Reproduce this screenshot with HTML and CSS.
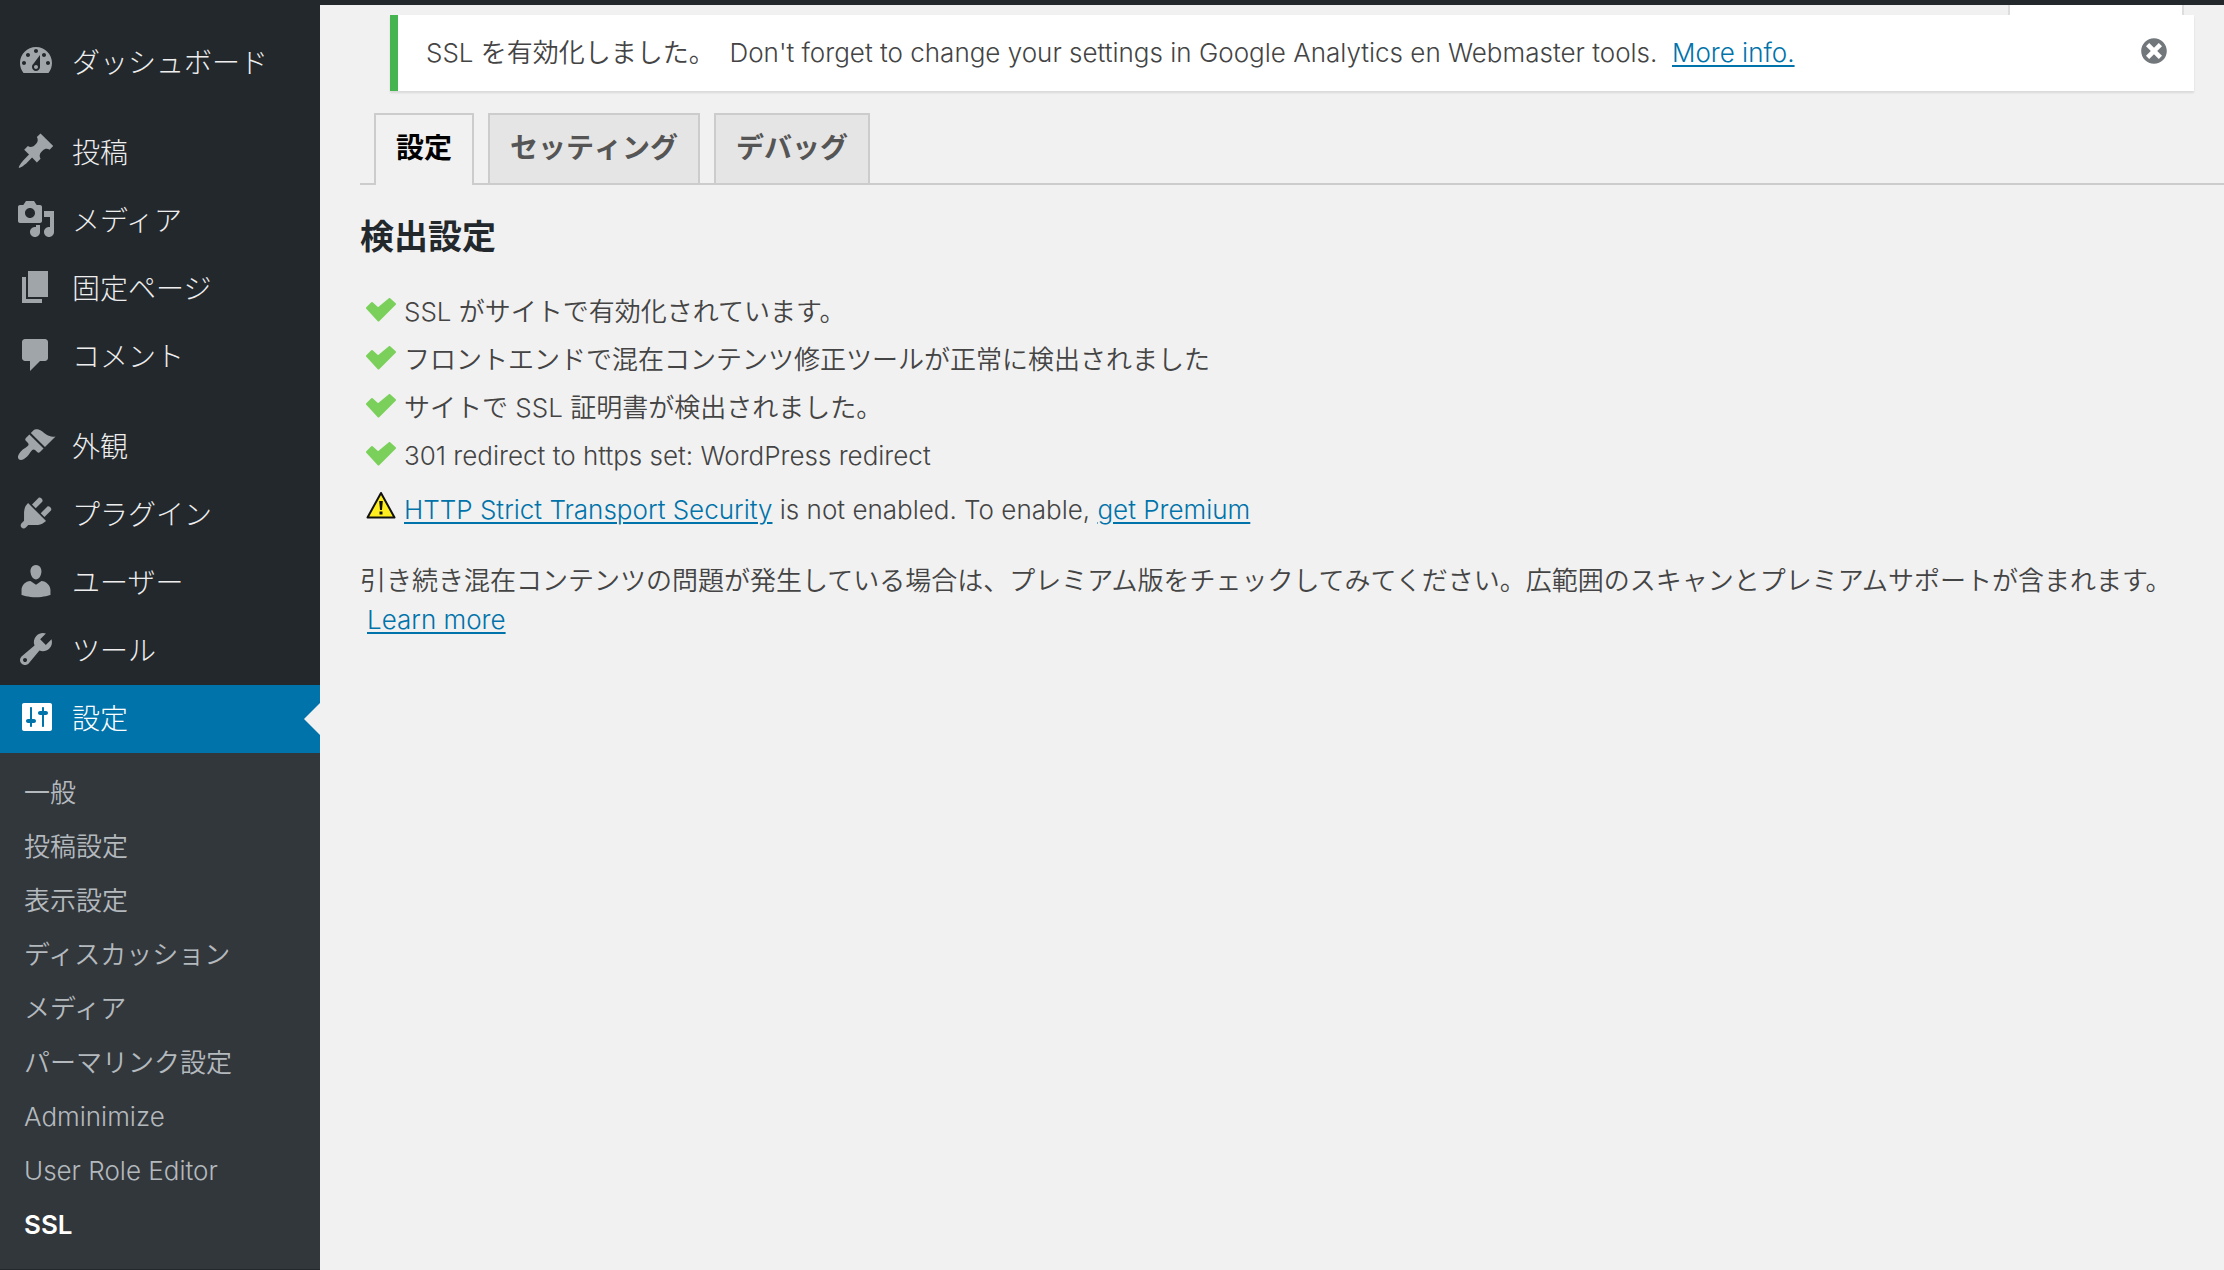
FILE: index.html
```html
<!DOCTYPE html>
<html lang="ja">
<head>
<meta charset="utf-8">
<title>SSL 設定</title>
<meta name="viewport" content="width=device-width, initial-scale=1">
<link rel="stylesheet" href="styles.css">
</head>
<body>
<div class="adminbar"></div>
<div class="layout">
  <nav class="sidebar" aria-label="メインメニュー">
    <ul class="menu">
      <li><a class="menu-link" href="#"><svg class="icon" viewBox="0 0 20 20"><path fill-rule="evenodd" d="M3.76 16h12.48c1.1-1.37 1.76-3.11 1.76-5 0-4.42-3.58-8-8-8s-8 3.58-8 8c0 1.89.66 3.63 1.76 5zM10 4c.55 0 1 .45 1 1s-.45 1-1 1-1-.45-1-1 .45-1 1-1zM6 6c.55 0 1 .45 1 1s-.45 1-1 1-1-.45-1-1 .45-1 1-1zm8 0c.55 0 1 .45 1 1s-.45 1-1 1-1-.45-1-1 .45-1 1-1zm-5.37 5.55L12 7v6c0 1.1-.9 2-2 2s-2-.9-2-2c0-.57.24-1.08.63-1.45zM4 10c.55 0 1 .45 1 1s-.45 1-1 1-1-.45-1-1 .45-1 1-1zm12 0c.55 0 1 .45 1 1s-.45 1-1 1-1-.45-1-1 .45-1 1-1zm-5 3c0-.55-.45-1-1-1s-1 .45-1 1 .45 1 1 1 1-.45 1-1z"/></svg>ダッシュボード</a></li>
      <li class="group"><a class="menu-link" href="#"><svg class="icon" viewBox="0 0 20 20"><path d="M10.44 3.02l1.82-1.82 6.36 6.35-1.83 1.82c-1.05-.68-2.48-.57-3.41.36l-.75.75c-.92.93-1.04 2.35-.35 3.41l-1.83 1.82-2.41-2.41-2.8 2.79c-.42.42-3.38 2.71-3.8 2.29s1.86-3.39 2.28-3.81l2.79-2.79L4.1 9.36l1.83-1.82c1.05.69 2.48.57 3.4-.36l.75-.75c.93-.92 1.05-2.35.36-3.41z"/></svg>投稿</a></li>
      <li><a class="menu-link" href="#"><svg class="icon" viewBox="0 0 20 20"><path fill-rule="evenodd" d="M13 11V4c0-.55-.45-1-1-1h-1.67L9 1H5L3.67 3H2c-.55 0-1 .45-1 1v7c0 .55.45 1 1 1h10c.55 0 1-.45 1-1zM7 4.5c1.38 0 2.5 1.12 2.5 2.5S8.38 9.5 7 9.5 4.5 8.38 4.5 7 5.62 4.5 7 4.5zM14 6h5v10.5c0 1.38-1.12 2.5-2.5 2.5S14 17.88 14 16.5s1.12-2.5 2.5-2.5c.17 0 .34.02.5.05V9h-3V6zm-4 8.05V13h2v3.5c0 1.38-1.12 2.5-2.5 2.5S7 17.88 7 16.5 8.12 14 9.5 14c.17 0 .34.02.5.05z"/></svg>メディア</a></li>
      <li><a class="menu-link" href="#"><svg class="icon" viewBox="0 0 20 20"><path d="M6 15V2h10v13H6zm-1 1h8v2H3V5h2v11z"/></svg>固定ページ</a></li>
      <li><a class="menu-link" href="#"><svg class="icon" viewBox="0 0 20 20"><path d="M4.500 2h10c.83 0 1.500.67 1.500 1.500v8c0 .83-.67 1.500-1.500 1.500H12l-5 5v-5H4.500c-.83 0-1.500-.67-1.500-1.500v-8C3 2.670 3.670 2 4.500 2z"/></svg>コメント</a></li>
      <li class="group"><a class="menu-link" href="#"><svg class="icon" viewBox="0 0 20 20"><path d="M14.48 11.06L7.41 3.99l1.5-1.5c.5-.56 2.3-.47 3.51.32 1.21.8 1.43 1.28 2.91 2.1 1.18.64 2.45 1.26 4.45.85zm-.71.71L6.7 4.7 4.93 6.47c-.39.39-.39 1.02 0 1.41l1.06 1.06c.39.39.39 1.03 0 1.42-.6.6-1.43 1.11-2.21 1.69-.35.26-.7.53-1.01.84C1.43 14.23.4 16.08 1.4 17.07c.99 1 2.84-.03 4.18-1.36.31-.31.58-.66.85-1.02.57-.78 1.08-1.61 1.69-2.21.39-.39 1.02-.39 1.41 0l1.06 1.06c.39.39 1.02.39 1.41 0z"/></svg>外観</a></li>
      <li><a class="menu-link" href="#"><svg class="icon" viewBox="0 0 20 20"><path d="M13.11 4.36L9.87 7.6 8 5.73l3.24-3.24c.35-.34 1.05-.2 1.56.32.52.51.66 1.21.31 1.55zm-8 1.77l.91-1.12 9.01 9.01-1.19.84c-.71.71-2.63 1.16-3.82 1.16H6.14L4.9 17.26c-.59.59-1.54.59-2.12 0-.59-.58-.59-1.53 0-2.12l1.24-1.24v-3.88c0-1.13.4-3.19 1.09-3.89zm7.26 3.97l3.24-3.24c.34-.35 1.04-.21 1.55.31.52.51.66 1.21.31 1.55l-3.24 3.25z"/></svg>プラグイン</a></li>
      <li><a class="menu-link" href="#"><svg class="icon" viewBox="0 0 20 20"><path d="M10 9.25c-2.27 0-2.73-3.44-2.73-3.44C7 4.02 7.82 2 9.97 2c2.16 0 2.98 2.02 2.71 3.81 0 0-.41 3.44-2.68 3.44zm0 2.57L12.72 10c2.39 0 4.52 2.33 4.52 4.53v2.49s-3.65 1.13-7.24 1.13c-3.65 0-7.24-1.13-7.24-1.13v-2.49c0-2.25 1.94-4.48 4.47-4.48z"/></svg>ユーザー</a></li>
      <li><a class="menu-link" href="#"><svg class="icon" viewBox="0 0 20 20"><path fill-rule="evenodd" d="M16.68 9.77c-1.34 1.34-3.3 1.67-4.95.99l-5.41 6.52c-.99.99-2.59.99-3.58 0s-.99-2.59 0-3.57l6.52-5.42c-.68-1.65-.35-3.61.99-4.95 1.28-1.28 3.12-1.62 4.72-1.06l-2.89 2.89 2.82 2.82 2.86-2.87c.53 1.58.18 3.39-1.08 4.65zM3.81 16.21c.4.39 1.04.39 1.43 0 .4-.4.4-1.04 0-1.43-.39-.4-1.03-.4-1.43 0-.39.39-.39 1.03 0 1.43z"/></svg>ツール</a></li>
      <li>
        <a class="menu-link current" href="#"><svg class="icon" viewBox="0 0 20 20"><path fill-rule="evenodd" d="M18 16V4c0-.55-.45-1-1-1H4c-.55 0-1 .45-1 1v12c0 .55.45 1 1 1h13c.55 0 1-.45 1-1zM8 11h1c.55 0 1 .45 1 1s-.45 1-1 1H8v1.5c0 .28-.22.5-.5.5s-.5-.22-.5-.5V13H6c-.55 0-1-.45-1-1s.45-1 1-1h1V5.500c0-.28.22-.5.5-.5s.5.22.5.5V11zm5-2h-1c-.55 0-1-.45-1-1s.45-1 1-1h1V5.500c0-.28.22-.5.5-.5s.5.22.5.5V7h1c.55 0 1 .45 1 1s-.45 1-1 1h-1v5.500c0 .28-.22.5-.5.5s-.5-.22-.5-.5V9z"/></svg>設定</a>
        <ul class="submenu">
          <li><a href="#">一般</a></li>
          <li><a href="#">投稿設定</a></li>
          <li><a href="#">表示設定</a></li>
          <li><a href="#">ディスカッション</a></li>
          <li><a href="#">メディア</a></li>
          <li><a href="#">パーマリンク設定</a></li>
          <li><a href="#">Adminimize</a></li>
          <li><a href="#">User Role Editor</a></li>
          <li><a class="active" href="#" aria-current="page">SSL</a></li>
        </ul>
      </li>
    </ul>
  </nav>
  <main class="content">
    <div class="screen-tab"></div>
    <div class="notice" role="status">
      <p>SSL を有効化しました。 &nbsp;Don't forget to change your settings in Google Analytics en Webmaster tools. &nbsp;<a href="#">More info.</a></p>
      <button class="dismiss" type="button" aria-label="この通知を非表示にする"><svg viewBox="0 0 20 20"><path d="M10 2c4.420 0 8 3.580 8 8s-3.580 8-8 8-8-3.580-8-8 3.580-8 8-8zm5 11l-3-3 3-3-2-2-3 3-3-3-2 2 3 3-3 3 2 2 3-3 3 3z"/></svg></button>
    </div>
    <nav class="tabs" aria-label="SSL">
      <a class="tab selected" href="#">設定</a>
      <a class="tab" href="#">セッティング</a>
      <a class="tab" href="#">デバッグ</a>
    </nav>
    <h2>検出設定</h2>
    <ul class="checks">
      <li><svg class="mark ok" viewBox="0 0 30 24"><path d="M1 10L6 5l6 5.500L23.500 1 29 6 12.500 22.500z"/></svg><span>SSL がサイトで有効化されています。</span></li>
      <li><svg class="mark ok" viewBox="0 0 30 24"><path d="M1 10L6 5l6 5.500L23.500 1 29 6 12.500 22.500z"/></svg><span>フロントエンドで混在コンテンツ修正ツールが正常に検出されました</span></li>
      <li><svg class="mark ok" viewBox="0 0 30 24"><path d="M1 10L6 5l6 5.500L23.500 1 29 6 12.500 22.500z"/></svg><span>サイトで SSL 証明書が検出されました。</span></li>
      <li><svg class="mark ok" viewBox="0 0 30 24"><path d="M1 10L6 5l6 5.500L23.500 1 29 6 12.500 22.500z"/></svg><span>301 redirect to https set: WordPress redirect</span></li>
      <li class="warn"><svg class="mark" viewBox="0 0 30 28"><path fill="#ffee1f" stroke="#111" stroke-width="2" stroke-linejoin="round" d="M15 2L28.500 26.500H1.500z"/><path fill="#111" d="M13.200 10h3.600l-.8 9h-2zM13.500 20.500h3v3h-3z"/></svg><span><a href="#">HTTP Strict Transport Security</a> is not enabled. To enable, <a href="#">get Premium</a></span></li>
    </ul>
    <p class="more">引き続き混在コンテンツの問題が発生している場合は、プレミアム版をチェックしてみてください。広範囲のスキャンとプレミアムサポートが含まれます。 <a href="#">Learn more</a></p>
  </main>
</div>
</body>
</html>
```
FILE: styles.css
```css
* {
  box-sizing: border-box;
}

body {
  margin: 0;
  background: #f1f1f1;
  color: #444;
  font-family: Inter, "Noto Sans CJK JP", sans-serif;
  font-size: 26px;
  font-weight: 350;
  line-height: 39px;
}

ul {
  list-style: none;
  margin: 0;
  padding: 0;
}

a {
  color: #0073aa;
  text-decoration-thickness: 2px;
  text-underline-offset: 3px;
}

.adminbar {
  height: 5px;
  background: #23282d;
}

.layout {
  display: flex;
  min-height: calc(100vh - 5px);
}

/* Sidebar */
.sidebar {
  flex: 0 0 320px;
  background: #23282d;
  padding-top: 24px;
}

.group {
  margin-top: 22px;
}

.menu-link {
  display: flex;
  align-items: center;
  gap: 16px;
  height: 68px;
  padding-left: 16px;
  color: #eee;
  font-size: 28px;
  font-weight: 300;
  text-decoration: none;
}

.icon {
  width: 40px;
  height: 40px;
  margin-bottom: 4px;
  fill: #a0a5aa;
}

.current {
  position: relative;
  background: #0073aa;
  color: #fff;
}

.current .icon {
  fill: #fff;
}

.current::after {
  content: "";
  position: absolute;
  right: 0;
  top: 18px;
  border: 16px solid transparent;
  border-left-width: 0;
  border-right-color: #f1f1f1;
}

.submenu {
  background: #32373c;
  padding: 14px 0 16px;
}

.submenu a {
  display: block;
  padding: 7px 24px 9px;
  line-height: 38px;
  color: #b4b9be;
  text-decoration: none;
}

.submenu .active {
  color: #fff;
  font-weight: 600;
}

/* Content */
.content {
  flex: 1;
  min-width: 0;
  padding-left: 40px;
}

.screen-tab {
  width: 176px;
  height: 10px;
  margin: 0 40px 0 auto;
  border: solid #ddd;
  border-width: 0 2px;
  background: #fff;
}

.notice {
  display: flex;
  justify-content: space-between;
  align-items: flex-start;
  margin: 0 30px 22px;
  padding: 18px 24px 19px 28px;
  border-left: 8px solid #46b450;
  background: #fff;
  box-shadow: 0 2px 2px rgba(0, 0, 0, 0.1);
}

.notice p {
  margin: 0;
}

.dismiss {
  display: flex;
  padding: 2px 0 0;
  border: 0;
  background: none;
}

.dismiss svg {
  width: 32px;
  height: 32px;
  fill: #72777c;
}

.tabs {
  display: flex;
  gap: 14px;
  padding-left: 14px;
  border-bottom: 2px solid #ccc;
}

.tab {
  padding: 14px 20px 16px;
  border: 2px solid #ccc;
  border-bottom: 0;
  background: #e5e5e5;
  color: #555;
  font-size: 28px;
  font-weight: 700;
  font-kerning: none;
  line-height: 38px;
  text-decoration: none;
}

.selected {
  margin-bottom: -2px;
  background: #f1f1f1;
  color: #000;
}

h2 {
  margin: 28px 0 26px;
  color: #23282d;
  font-size: 34px;
  line-height: 48px;
}

.checks li {
  display: flex;
  align-items: center;
  gap: 8px;
  height: 48px;
  padding-left: 6px;
}

.checks .warn {
  height: 60px;
}

.mark {
  width: 30px;
  height: 28px;
  margin-bottom: 8px;
}

.ok {
  height: 24px;
  margin-bottom: 2px;
  fill: #7ad05a;
  stroke: #7ad05a;
  stroke-width: 2px;
  stroke-linejoin: round;
}

.more {
  margin: 22px 30px 0 0;
}

.more a {
  display: inline-block;
  margin-left: 7px;
}
```
